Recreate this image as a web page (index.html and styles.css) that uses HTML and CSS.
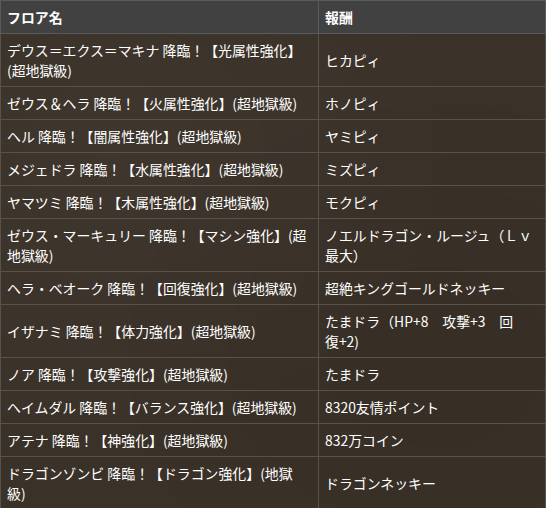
FILE: index.html
```html
<!DOCTYPE html>
<html lang="ja">
<head>
<meta charset="utf-8">
<title>報酬一覧</title>
<link rel="stylesheet" href="styles.css">
</head>
<body>
<table class="reward-table">
  <thead>
    <tr><th class="col-floor">フロア名</th><th class="col-reward">報酬</th></tr>
  </thead>
  <tbody>
    <tr><td>デウス＝エクス＝マキナ 降臨！【光属性強化】<br>(超地獄級)</td><td>ヒカピィ</td></tr>
    <tr><td>ゼウス＆ヘラ 降臨！【火属性強化】(超地獄級)</td><td>ホノピィ</td></tr>
    <tr><td>ヘル 降臨！【闇属性強化】(超地獄級)</td><td>ヤミピィ</td></tr>
    <tr><td>メジェドラ 降臨！【水属性強化】(超地獄級)</td><td>ミズピィ</td></tr>
    <tr><td>ヤマツミ 降臨！【木属性強化】(超地獄級)</td><td>モクピィ</td></tr>
    <tr><td>ゼウス・マーキュリー 降臨！【マシン強化】(超<br>地獄級)</td><td>ノエルドラゴン・ルージュ（Ｌｖ<br>最大）</td></tr>
    <tr><td>ヘラ・ベオーク 降臨！【回復強化】(超地獄級)</td><td>超絶キングゴールドネッキー</td></tr>
    <tr><td>イザナミ 降臨！【体力強化】(超地獄級)</td><td>たまドラ（HP+8　攻撃+3　回<br>復+2)</td></tr>
    <tr><td>ノア 降臨！【攻撃強化】(超地獄級)</td><td>たまドラ</td></tr>
    <tr><td>ヘイムダル 降臨！【バランス強化】(超地獄級)</td><td>8320友情ポイント</td></tr>
    <tr><td>アテナ 降臨！【神強化】(超地獄級)</td><td>832万コイン</td></tr>
    <tr><td>ドラゴンゾンビ 降臨！【ドラゴン強化】(地獄<br>級)</td><td>ドラゴンネッキー</td></tr>
  </tbody>
</table>
</body>
</html>
```

FILE: styles.css
```css
html, body {
  margin: 0;
  padding: 0;
  background: #3a3128;
}

.reward-table {
  width: 546px;
  border-collapse: collapse;
  font-family: "Noto Sans CJK JP", "Noto Sans", sans-serif;
  font-size: 13.9px;
  line-height: 20px;
  color: #ffffff;
  background-color: #3a3128;
  background-image:
    radial-gradient(ellipse at 20% 30%, rgba(255,255,255,0.025), transparent 60%),
    radial-gradient(ellipse at 80% 70%, rgba(0,0,0,0.06), transparent 60%);
}

.reward-table th,
.reward-table td {
  border: 1px solid #57524c;
  padding: 6px 7px 6px 6px;
  height: 20px;
  text-align: left;
  vertical-align: middle;
  white-space: nowrap;
}

.reward-table th {
  background: #414141;
  border-color: #5a5a5a;
  font-weight: bold;
}

.col-floor {
  width: 304px;
}
```
